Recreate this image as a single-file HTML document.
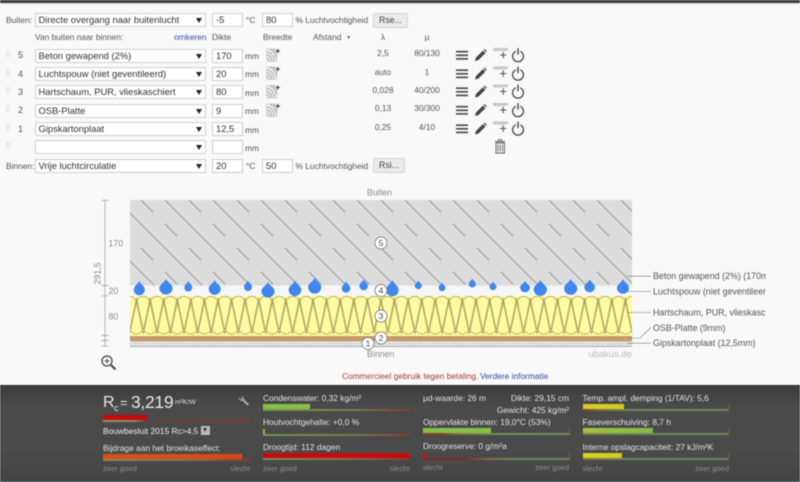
<!DOCTYPE html>
<html><head><meta charset="utf-8"><style>
html,body{margin:0;padding:0;width:800px;height:482px;overflow:hidden;background:#f9f9f9}
#r{position:relative;width:800px;height:482px;overflow:hidden;font-family:"Liberation Sans",sans-serif;filter:blur(.4px)}
#r div{position:absolute;box-sizing:border-box}
.t{font-size:8.4px;color:#555;line-height:12px;height:12px;white-space:nowrap}
.v{font-size:8.4px;color:#555;line-height:12px;height:12px;text-align:center;width:50px;white-space:nowrap}
.s{left:34.5px;width:171px;height:14px;background:#fff;border:1px solid #d0d0d0;font-size:9.4px;line-height:12px;color:#333;padding-left:3px;white-space:nowrap}
.s i{position:absolute;left:160px;top:4px;width:0;height:0;border-left:3px solid transparent;border-right:3px solid transparent;border-top:5px solid #222}
.i{height:14px;width:31px;background:#fff;border:1px solid #d0d0d0;font-size:9.4px;line-height:12px;color:#333;padding-left:3px}
.a{left:212px}.c{left:262px}
.btn{height:14.5px;background:#ebebeb;border:1px solid #d4d4d4;border-radius:2px;font-size:8.8px;line-height:13px;color:#444;text-align:center;left:373px}
.p{font-size:8.4px;color:#e2e2e2;line-height:12px;height:12px;white-space:nowrap}
.g{font-size:7.6px;color:#8e8e8e;line-height:10px;height:10px;white-space:nowrap}
.bar{height:5px}
.ln{height:2px;width:146.5px}
.tk{width:1px;height:7px}
</style></head><body><div id="r">
<div style="left:0;top:0;width:800px;height:3px;background:#3a3a3a"></div>
<div style="left:0;top:3px;width:800px;height:2px;background:#e8e8e8"></div>

<div class="t" style="left:6px;top:14px">Buiten:</div>
<div class="s" style="top:13px">Directe overgang naar buitenlucht<i></i></div>
<div class="i a" style="top:13px">-5</div><div class="t" style="left:246px;top:14px">°C</div>
<div class="i c" style="top:13px">80</div><div class="t" style="left:295.5px;top:14px">% Luchtvochtigheid</div>
<div class="btn" style="top:13px;width:35px">Rse...</div>

<div class="t" style="left:35px;top:31px">Van buiten naar binnen:</div>
<div class="t" style="left:174px;top:31px;color:#3a4aa8">omkeren</div>
<div class="t" style="left:212px;top:31px">Dikte</div>
<div class="t" style="left:263px;top:31px">Breedte</div>
<div class="t" style="left:313px;top:31px">Afstand &nbsp;<span style="font-size:5px;vertical-align:1px">▼</span></div>
<div class="v" style="left:358px;top:31px">λ</div>
<div class="v" style="left:402px;top:31px">µ</div>

<div class="t" style="left:18px;top:49px;font-size:9px">5</div>
<div class="t" style="left:18px;top:68px;font-size:9px">4</div>
<div class="t" style="left:18px;top:86px;font-size:9px">3</div>
<div class="t" style="left:18px;top:104px;font-size:9px">2</div>
<div class="t" style="left:18px;top:123px;font-size:9px">1</div>

<div class="s" style="top:48.5px">Beton gewapend (2%)<i></i></div>
<div class="s" style="top:66.5px">Luchtspouw (niet geventileerd)<i></i></div>
<div class="s" style="top:85px">Hartschaum, PUR, vlieskaschiert<i></i></div>
<div class="s" style="top:103.5px">OSB-Platte<i></i></div>
<div class="s" style="top:122px">Gipskartonplaat<i></i></div>
<div class="s" style="top:140px"><i></i></div>

<div class="i a" style="top:48.5px">170</div><div class="t" style="left:245px;top:50px">mm</div>
<div class="i a" style="top:66.5px">20</div><div class="t" style="left:245px;top:68px">mm</div>
<div class="i a" style="top:85px">80</div><div class="t" style="left:245px;top:86.5px">mm</div>
<div class="i a" style="top:103.5px">9</div><div class="t" style="left:245px;top:105px">mm</div>
<div class="i a" style="top:122px">12,5</div><div class="t" style="left:245px;top:123.5px">mm</div>
<div class="i a" style="top:140px"></div><div class="t" style="left:245px;top:141.5px">mm</div>

<div class="v" style="left:358px;top:47px">2,5</div><div class="v" style="left:402px;top:47px">80/130</div>
<div class="v" style="left:358px;top:65.5px">auto</div><div class="v" style="left:402px;top:65.5px">1</div>
<div class="v" style="left:358px;top:84px">0,028</div><div class="v" style="left:402px;top:84px">40/200</div>
<div class="v" style="left:358px;top:102px">0,13</div><div class="v" style="left:402px;top:102px">30/300</div>
<div class="v" style="left:358px;top:120.5px">0,25</div><div class="v" style="left:402px;top:120.5px">4/10</div>

<div class="t" style="left:6px;top:160px">Binnen:</div>
<div class="s" style="top:158.5px">Vrije luchtcirculatie<i></i></div>
<div class="i a" style="top:158.5px">20</div><div class="t" style="left:246px;top:160px">°C</div>
<div class="i c" style="top:158.5px">50</div><div class="t" style="left:295.5px;top:160px">% Luchtvochtigheid</div>
<div class="btn" style="top:158px;width:32px">Rsi...</div>

<svg style="position:absolute;left:0;top:0" width="800" height="482" viewBox="0 0 800 482">
<defs>
<symbol id="ic" overflow="visible" viewBox="0 0 80 16" width="80" height="16">
<g fill="#444"><rect x="0" y="3.4" width="12" height="1.6"/><rect x="0" y="7" width="12" height="1.6"/><rect x="0" y="10.6" width="12" height="1.6"/></g>
<path d="M19 13.5l.9-3.4 7-7 2.5 2.5-7 7z" fill="#444"/><path d="M27.6 2.4l.9-.9 2.4 2.4-.9.9z" fill="#444"/>
<rect x="37" y="0.5" width="15" height="2.6" fill="#c6c6c6"/><rect x="37" y="3.1" width="12" height="1" fill="#e0e0e0"/>
<path d="M44 7.5h6.4M47.2 4.4v6.4" stroke="#555" stroke-width="1.1" fill="none"/>
<path d="M59.8 3.8a5.4 5.4 0 1 0 4.4 0" stroke="#444" stroke-width="1.3" fill="none"/><path d="M62 .6v6.6" stroke="#444" stroke-width="1.4"/>
</symbol>
<symbol id="hi" overflow="visible" viewBox="0 0 14 15" width="14" height="15">
<rect x="0.5" y="1" width="10.5" height="12.5" fill="#eee" stroke="#ccc" stroke-width=".7"/>
<path d="M.8 4c4 0 7 3 7.500 9M.8 7c3 0 5 3 5 6.400M.8 10c1.500 0 2.300 1.500 2.500 3.400M3.500 1c3.500 1 6 4 7 9M7 1c2 .8 3.300 2 4 4" fill="none" stroke="#999" stroke-width=".8"/>
<path d="M10 3h4M12 1v4" stroke="#444" stroke-width="1"/>
</symbol>
<pattern id="hatch" patternUnits="userSpaceOnUse" x="117" y="200" width="48" height="48">
<path d="M-1 -1L49 49M24 0L36 12M0 24L12 36" stroke="#6c6c6c" stroke-width=".6" fill="none"/>
</pattern>
<pattern id="ins" patternUnits="userSpaceOnUse" x="136.500" y="296" width="13.580" height="40">
<rect width="13.580" height="40" fill="#fffb9f"/>
<path d="M6.790 38L.2 7A6.600 6.600 0 1 1 13.400 7Z" fill="#fffaa4" stroke="#a19a5c" stroke-width=".7"/>
<path d="M0 2L6.400 33A6.600 6.600 0 0 1 -6.400 33Z M13.580 2L20 33A6.600 6.600 0 0 1 7.200 33Z" fill="none" stroke="#a19a5c" stroke-width=".7"/>
</pattern>
<pattern id="osb" patternUnits="userSpaceOnUse" x="130" y="336" width="5" height="5">
<rect width="5" height="5" fill="#cda272"/><path d="M1 0v5M3.500 0v5" stroke="#ba8a58" stroke-width=".7"/>
</pattern>
</defs>

<g fill="#c4c4c4"><circle cx="7" cy="51" r=".6"/><circle cx="9.300" cy="51" r=".6"/><circle cx="7" cy="53.500" r=".6"/><circle cx="9.300" cy="53.500" r=".6"/><circle cx="7" cy="56" r=".6"/><circle cx="9.300" cy="56" r=".6"/>
<circle cx="7" cy="70" r=".6"/><circle cx="9.300" cy="70" r=".6"/><circle cx="7" cy="72.500" r=".6"/><circle cx="9.300" cy="72.500" r=".6"/><circle cx="7" cy="75" r=".6"/><circle cx="9.300" cy="75" r=".6"/>
<circle cx="7" cy="88" r=".6"/><circle cx="9.300" cy="88" r=".6"/><circle cx="7" cy="90.500" r=".6"/><circle cx="9.300" cy="90.500" r=".6"/><circle cx="7" cy="93" r=".6"/><circle cx="9.300" cy="93" r=".6"/>
<circle cx="7" cy="106" r=".6"/><circle cx="9.300" cy="106" r=".6"/><circle cx="7" cy="108.500" r=".6"/><circle cx="9.300" cy="108.500" r=".6"/><circle cx="7" cy="111" r=".6"/><circle cx="9.300" cy="111" r=".6"/>
<circle cx="7" cy="125" r=".6"/><circle cx="9.300" cy="125" r=".6"/><circle cx="7" cy="127.500" r=".6"/><circle cx="9.300" cy="127.500" r=".6"/><circle cx="7" cy="130" r=".6"/><circle cx="9.300" cy="130" r=".6"/>
<circle cx="7" cy="143" r=".6"/><circle cx="9.300" cy="143" r=".6"/><circle cx="7" cy="145.500" r=".6"/><circle cx="9.300" cy="145.500" r=".6"/><circle cx="7" cy="148" r=".6"/><circle cx="9.300" cy="148" r=".6"/></g>

<use href="#hi" x="266" y="48"/><use href="#hi" x="266" y="66"/><use href="#hi" x="266" y="84.500"/><use href="#hi" x="266" y="103"/>
<use href="#ic" x="456" y="47.500"/><use href="#ic" x="456" y="66"/><use href="#ic" x="456" y="84"/><use href="#ic" x="456" y="102.500"/><use href="#ic" x="456" y="121"/>
<g stroke="#555" fill="none"><path d="M495 141.500h10" stroke-width="1"/><path d="M498.500 141v-1.500h3v1.500" stroke-width=".8"/><path d="M496 143h8.400v10h-8.400z" stroke-width=".9"/><path d="M498 144.500v7M500.200 144.500v7M502.400 144.500v7" stroke-width=".8"/></g>

<!-- drawing -->
<rect x="130" y="200" width="502" height="85.500" fill="#dcdcdc"/>
<rect x="130" y="200" width="502" height="85.500" fill="url(#hatch)"/>
<rect x="130" y="285.500" width="502" height="10.500" fill="#f6f6f6"/>
<rect x="130" y="296" width="502" height="40" fill="url(#ins)"/>
<rect x="130" y="336" width="502" height="5" fill="url(#osb)"/>
<path d="M130 340.800H632" stroke="#9a7850" stroke-width=".6"/>
<rect x="130" y="341" width="502" height="5.500" fill="#dedede"/>
<path d="M130 346.600H632" stroke="#999" stroke-width=".8"/>
<g fill="#a8a8a8"><circle cx="165" cy="344" r=".4"/><circle cx="192" cy="343" r=".4"/><circle cx="197" cy="345" r=".4"/><circle cx="208" cy="343" r=".4"/><circle cx="214" cy="344" r=".4"/><circle cx="240" cy="344" r=".4"/><circle cx="268" cy="343" r=".4"/><circle cx="270" cy="345" r=".4"/><circle cx="275" cy="344" r=".4"/><circle cx="302" cy="343" r=".4"/><circle cx="310" cy="345" r=".4"/><circle cx="345" cy="344" r=".4"/><circle cx="352" cy="342" r=".4"/><circle cx="404" cy="343" r=".4"/><circle cx="411" cy="344" r=".4"/><circle cx="420" cy="343" r=".4"/><circle cx="438" cy="343" r=".4"/><circle cx="445" cy="342" r=".4"/><circle cx="453" cy="343" r=".4"/><circle cx="460" cy="344" r=".4"/><circle cx="482" cy="344" r=".4"/><circle cx="492" cy="344" r=".4"/><circle cx="504" cy="345" r=".4"/><circle cx="541" cy="344" r=".4"/><circle cx="545" cy="345" r=".4"/><circle cx="566" cy="344" r=".4"/><circle cx="610" cy="344" r=".4"/><circle cx="620" cy="345" r=".4"/></g>

<!-- drops -->
<g fill="#3f86ee">
<path d="M139.300 281C140.500 284 144.800 286 144.800 289.700a5.500 5.500 0 0 1-11 0C133.800 286 138.100 284 139.300 281Z"/>
<path d="M166 279C167.500 282.500 172.600 284.500 172.600 288a6.600 6.600 0 0 1-13.200 0C159.400 284.500 164.500 282.500 166 279Z"/>
<path d="M188.300 281C189.200 283.500 192.300 284.500 192.300 287.500a4 4 0 0 1-8 0C184.300 284.500 187.400 283.500 188.300 281Z"/>
<path d="M214.700 280C216 283.500 220.700 285 220.700 288.700a6 6 0 0 1-12 0C208.700 285 213.400 283.500 214.700 280Z"/>
<path d="M248 280.500C248.900 283 252 284 252 287a4 4 0 0 1-8 0C244 284 247.100 283 248 280.500Z"/>
<path d="M268 282C269.500 285.500 274.600 287.500 274.600 291a6.600 6.600 0 0 1-13.200 0C261.400 287.500 266.500 285.500 268 282Z"/>
<path d="M295 280.500C296.400 284 301.300 286 301.300 289.700a6.300 6.300 0 0 1-12.600 0C288.700 286 293.600 284 295 280.500Z"/>
<path d="M314.700 278C316.200 281.500 321.300 283.500 321.300 287a6.600 6.600 0 0 1-13.200 0C308.100 283.500 313.200 281.500 314.700 278Z"/>
<path d="M346 281.500C347 284 350.300 285.300 350.300 288.300a4.300 4.300 0 0 1-8.600 0C341.700 285.300 345 284 346 281.500Z"/>
<path d="M363.700 279.500C364.700 282 368 283 368 286a4.300 4.300 0 0 1-8.600 0C359.400 283 362.700 282 363.700 279.500Z"/>
<path d="M392.300 280C393.700 283.500 398.600 286 398.600 290a6.300 6.300 0 0 1-12.600 0C386 286 390.900 283.500 392.300 280Z"/>
<path d="M418.300 280.500C419 282.500 421.800 283.500 421.800 285.700a3.500 3.500 0 0 1-7 0C414.800 283.500 417.600 282.500 418.300 280.500Z"/>
<path d="M442 282.500C442.700 284.500 445.500 285.500 445.500 287.700a3.500 3.500 0 0 1-7 0C438.500 285.500 441.300 284.500 442 282.500Z"/>
<path d="M472.300 278.500C473 280.500 475.800 281.800 475.800 284a3.500 3.500 0 0 1-7 0C468.800 281.800 471.600 280.500 472.300 278.500Z"/>
<path d="M493 281.500C493.700 283.500 496.500 284.500 496.500 286.700a3.500 3.500 0 0 1-7 0C489.500 284.500 492.300 283.500 493 281.500Z"/>
<path d="M525 281C526 283.500 530 285 530 287.300a5 5 0 0 1-10 0C520 285 524 283.500 525 281Z"/>
<path d="M540.300 280C541.800 283.500 546.900 285.500 546.900 289.300a6.600 6.600 0 0 1-13.200 0C533.700 285.500 538.800 283.500 540.300 280Z"/>
<path d="M570.700 279C572.200 282.500 577.300 284.500 577.300 288.300a6.600 6.600 0 0 1-13.200 0C564.100 284.500 569.200 282.500 570.700 279Z"/>
<path d="M589.700 279.500C590.900 282.500 595 284 595 287a5.300 5.300 0 0 1-10.600 0C584.400 284 588.500 282.500 589.700 279.500Z"/>
<path d="M623 279C624.300 282.500 629 284.500 629 287.700a6 6 0 0 1-12 0C617 284.500 621.700 282.500 623 279Z"/>
</g>

<!-- scale -->
<g stroke="#999" stroke-width=".7" fill="none">
<path d="M105 200V346.500M101.500 200.300h7M101.500 285.500h7M101.500 295.800h7M101.500 335.500h7M101.500 340.500h7M101.500 346.200h7"/>
</g>
<g font-family="Liberation Sans" font-size="8.800" fill="#8a8a8a">
<text x="108.500" y="246.500">170</text><text x="108.500" y="294">20</text><text x="108.500" y="319.500">80</text>
<text transform="translate(100.500,273.500) rotate(-90)" text-anchor="middle">291,5</text>
<text x="367" y="195.500">Buiten</text><text x="367" y="357">Binnen</text>
</g>
<text x="632" y="357" text-anchor="end" font-family="Liberation Sans" font-size="9.500" fill="#bdbdbd">ubakus.de</text>

<!-- circles -->
<g fill="#fff" stroke="#666" stroke-width=".7"><circle cx="368" cy="343.500" r="6"/><circle cx="381" cy="338" r="6"/><circle cx="381" cy="316" r="6"/><circle cx="381" cy="290.500" r="6"/><circle cx="381" cy="243" r="6"/></g>
<g font-family="Liberation Sans" font-size="8.500" fill="#444" text-anchor="middle"><text x="368" y="346.500">1</text><text x="381" y="341">2</text><text x="381" y="319">3</text><text x="381" y="293.500">4</text><text x="381" y="246">5</text></g>

<!-- leaders -->
<g stroke="#777" stroke-width=".6" fill="none"><path d="M627 276.200H651M627 291.500H651M627 312.500H651M627 338H640L651 327.500M627 343.200H651"/></g>
<g font-family="Liberation Sans" font-size="8.900" fill="#555"><text x="653" y="279">Beton gewapend (2%) (170m</text><text x="653" y="294.500">Luchtspouw (niet geventileer</text><text x="653" y="315.500">Hartschaum, PUR, vlieskasc</text><text x="653" y="331">OSB-Platte (9mm)</text><text x="653" y="346">Gipskartonplaat (12,5mm)</text></g>

<!-- magnifier -->
<circle cx="107" cy="361" r="5" fill="none" stroke="#444" stroke-width="1.300"/><path d="M104.500 361h5M107 358.500v5" stroke="#444" stroke-width=".9"/><path d="M111 365l4.500 4.500" stroke="#444" stroke-width="2"/>
<rect x="766" y="270" width="34" height="80" fill="#f9f9f9"/>
</svg>

<div class="t" style="left:342px;top:369.500px;color:#a83838">Commercieel gebruik tegen betaling.</div>
<div class="t" style="left:480px;top:369.500px;color:#3a45a8">Verdere informatie</div>

<!-- panel -->
<div style="left:0;top:385px;width:800px;height:97px;background:linear-gradient(#3e3e3e,#4a4a4a 22%,#4a4a4a 70%,#444);border-top:1px solid #2c2c2c;border-bottom:1.5px solid #25403f"></div>

<div style="left:103px;top:393px;font-size:16px;line-height:20px;color:#e6e6e6;height:20px">R</div>
<div style="left:114px;top:402px;font-size:9px;line-height:12px;color:#e6e6e6;height:12px">c</div>
<div style="left:120px;top:393px;font-size:13px;line-height:20px;color:#e6e6e6;height:20px">=</div>
<div style="left:131px;top:392px;font-size:17.500px;line-height:20px;letter-spacing:-.3px;color:#e6e6e6;height:20px">3,219</div>
<div style="left:175px;top:397px;font-size:6.800px;line-height:12px;color:#e0e0e0;height:12px;white-space:nowrap">m²K/W</div>
<svg style="position:absolute;left:238px;top:396px" width="12" height="12" viewBox="0 0 12 12"><path d="M1 1.500a2.800 2.800 0 0 0 3.600 3.200l5 5 1.500-1.200-5-5.200A2.800 2.800 0 0 0 3 .5l1.500 2-1.300 1z" fill="#aaa"/></svg>

<div class="bar" style="left:103px;top:414.500px;width:44px;height:5.500px;background:#c00c0c"></div>
<div class="ln" style="left:103px;top:420px;background:linear-gradient(90deg,#8d9460,#8d8a58 21%,#5a4238 30%,#803a30 100%)"></div>
<div class="tk" style="left:249px;top:415px;background:#5e4a44"></div>
<div class="p" style="left:103px;top:425px;color:#eee">Bouwbesluit 2015 Rc&gt;4.5</div>
<div style="left:200.500px;top:426px;width:9.500px;height:8.500px;background:#bbb"></div>
<div style="left:202.500px;top:428px;width:0;height:0;border-left:2.800px solid transparent;border-right:2.800px solid transparent;border-top:4.500px solid #333"></div>
<div class="p" style="left:103px;top:442px">Bijdrage aan het broeikaseffect:</div>
<div class="bar" style="left:103px;top:454px;width:139px;background:linear-gradient(90deg,#d8501c,#d84a14)"></div>
<div class="ln" style="left:103px;top:459px;background:linear-gradient(90deg,#848c54,#807248 60%,#843e30)"></div>
<div class="tk" style="left:249px;top:454px;background:#5e4a44"></div>
<div class="g" style="left:103px;top:464px">zeer goed</div>
<div class="g" style="left:200px;top:464px;width:50px;text-align:right">slecht</div>

<div class="p" style="left:263px;top:392px">Condenswater: 0,32 kg/m²</div>
<div class="bar" style="left:263px;top:404px;width:47px;background:#86c048"></div>
<div class="ln" style="left:263px;top:409px;background:linear-gradient(90deg,#76944e,#74804a 60%,#843c30)"></div>
<div class="tk" style="left:409px;top:404px;background:#5e4a44"></div>
<div class="p" style="left:263px;top:416px">Houtvochtgehalte: +0,0 %</div>
<div class="bar" style="left:263px;top:429px;width:2px;background:#86c048"></div>
<div class="ln" style="left:263px;top:434px;background:linear-gradient(90deg,#76944e,#74804a 60%,#843c30)"></div>
<div class="tk" style="left:409px;top:429px;background:#5e4a44"></div>
<div class="p" style="left:263px;top:441px">Droogtijd: 112 dagen</div>
<div class="bar" style="left:263px;top:453px;width:146.500px;background:#c40c10"></div>
<div class="ln" style="left:263px;top:458px;background:linear-gradient(90deg,#7c8c50,#807248 60%,#843c2e)"></div>
<div class="g" style="left:263px;top:463.500px">zeer goed</div>
<div class="g" style="left:359.500px;top:463.500px;width:50px;text-align:right">slecht</div>

<div class="p" style="left:423px;top:392px">µd-waarde: 26 m</div>
<div class="p" style="left:489px;top:392px;width:80px;text-align:right">Dikte: 29,15 cm</div>
<div class="p" style="left:469px;top:403.500px;width:100px;text-align:right">Gewicht: 425 kg/m²</div>
<div class="p" style="left:423px;top:416px">Oppervlakte binnen: 19,0°C (53%)</div>
<div class="bar" style="left:423px;top:428px;width:68px;background:#86c048"></div>
<div class="ln" style="left:423px;top:433px;background:linear-gradient(90deg,#8a3a2c,#8a3a2c 12%,#807248 22%,#72905a 50%,#6c8a5a)"></div>
<div class="tk" style="left:569px;top:428px;background:#5e6e50"></div>
<div class="p" style="left:423px;top:440px">Droogreserve: 0 g/m²a</div>
<div class="bar" style="left:423px;top:453px;width:3px;background:#d01010"></div>
<div class="ln" style="left:423px;top:458px;background:linear-gradient(90deg,#7c2c24,#7c2c24 30%,#807248 46%,#6c8a5a 62%,#6c8a5a)"></div>
<div class="tk" style="left:569px;top:453px;background:#5e6e50"></div>
<div class="g" style="left:423px;top:463px">slecht</div>
<div class="g" style="left:509px;top:463px;width:60px;text-align:right">zeer goed</div>

<div class="p" style="left:582.500px;top:392px">Temp. ampl. demping (1/TAV): 5,6</div>
<div class="bar" style="left:582.500px;top:404px;width:41px;background:linear-gradient(90deg,#d4d020,#d8c820)"></div>
<div class="ln" style="left:582.500px;top:409px;background:linear-gradient(90deg,#8a3a2c,#807248 12%,#6a8858 28%,#6a8858)"></div>
<div class="tk" style="left:728px;top:404px;background:#5e6e50"></div>
<div class="p" style="left:582.500px;top:416px">Faseverschuiving: 8,7 h</div>
<div class="bar" style="left:582.500px;top:428px;width:70px;background:linear-gradient(90deg,#a8c040,#80bc48)"></div>
<div class="ln" style="left:582.500px;top:433px;background:linear-gradient(90deg,#807c48,#6a8858 28%,#6a8858)"></div>
<div class="tk" style="left:728px;top:428px;background:#5e6e50"></div>
<div class="p" style="left:582.500px;top:441px">Interne opslagcapaciteit: 27 kJ/m²K</div>
<div class="bar" style="left:582.500px;top:453px;width:39.500px;background:linear-gradient(90deg,#d8d020,#d8c820)"></div>
<div class="ln" style="left:582.500px;top:458px;background:linear-gradient(90deg,#807248,#6a8858 28%,#6a8858)"></div>
<div class="tk" style="left:728px;top:453px;background:#5e6e50"></div>
<div class="g" style="left:582.500px;top:463.500px">slecht</div>
<div class="g" style="left:669px;top:463.500px;width:60px;text-align:right">zeer goed</div>
</div></body></html>
